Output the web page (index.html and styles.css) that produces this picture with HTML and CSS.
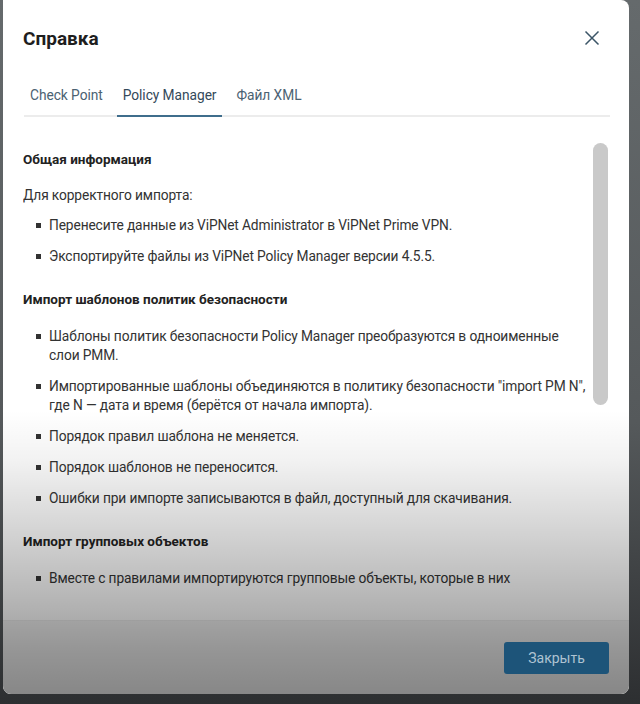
FILE: index.html
```html
<!DOCTYPE html>
<html lang="ru">
<head>
<meta charset="utf-8">
<title>Справка</title>
<link rel="stylesheet" href="styles.css">
</head>
<body>
<div class="dialog">
  <div class="header">
    <h1 class="title">Справка</h1>
    <button class="close" aria-label="Закрыть">
      <svg width="16" height="16" viewBox="0 0 16 16"><path d="M1.5 1.5 L14.5 14.5 M14.5 1.5 L1.5 14.5" stroke="#3b5567" stroke-width="1.5" fill="none"/></svg>
    </button>
  </div>
  <div class="tabs">
    <div class="tab">Check Point</div>
    <div class="tab active">Policy Manager</div>
    <div class="tab">Файл XML</div>
  </div>
  <div class="body">
    <div class="scroll">
      <h2 class="h">Общая информация</h2>
      <p class="p">Для корректного импорта:</p>
      <ul class="list">
        <li>Перенесите данные из ViPNet Administrator в ViPNet Prime VPN.</li>
        <li>Экспортируйте файлы из ViPNet Policy Manager версии 4.5.5.</li>
      </ul>
      <h2 class="h h2">Импорт шаблонов политик безопасности</h2>
      <ul class="list">
        <li>Шаблоны политик безопасности Policy Manager преобразуются в одноименные слои PMM.</li>
        <li>Импортированные шаблоны объединяются в политику безопасности "import PM N", где N — дата и время (берётся от начала импорта).</li>
        <li>Порядок правил шаблона не меняется.</li>
        <li>Порядок шаблонов не переносится.</li>
        <li>Ошибки при импорте записываются в файл, доступный для скачивания.</li>
      </ul>
      <h2 class="h h2">Импорт групповых объектов</h2>
      <ul class="list">
        <li>Вместе с правилами импортируются групповые объекты, которые в них используются.</li>
      </ul>
    </div>
    <div class="thumb"></div>
  </div>
  <div class="footer">
    <button class="btn">Закрыть</button>
  </div>
  <div class="shade"></div>
</div>
</body>
</html>
```
FILE: styles.css
```css
html, body {
  margin: 0;
  padding: 0;
}
body {
  width: 640px;
  height: 704px;
  overflow: hidden;
  background: linear-gradient(to bottom, #656a6c 0%, #55595b 60%, #2d2f31 100%);
  font-family: Roboto, "Noto Sans", sans-serif;
}
.dialog {
  position: relative;
  margin-left: 3px;
  width: 626px;
  height: 694px;
  background: #ffffff;
  border-radius: 0 8px 8px 8px;
  display: flex;
  flex-direction: column;
  overflow: hidden;
}
.header {
  height: 80px;
  display: flex;
  align-items: center;
  justify-content: space-between;
  padding: 0 29px 0 20px;
  flex: none;
}
.title {
  margin: 0;
  font-size: 19px;
  font-weight: 700;
  color: #1e1e1e;
  padding-bottom: 4px;
}
.close {
  border: 0;
  background: none;
  padding: 0;
  width: 16px;
  height: 16px;
  display: flex;
  margin-bottom: 5px;
}
.tabs {
  flex: none;
  display: flex;
  gap: 8px;
  margin: 0 19px 0 21px;
  height: 37px;
  border-bottom: 2px solid #ececec;
  box-sizing: border-box;
}
.tab {
  padding: 7px 6px 0;
  font-size: 13.75px;
  letter-spacing: -0.05px;
  color: #4b6272;
  margin-bottom: -2px;
  border-bottom: 2px solid transparent;
}
.tab.active {
  color: #34495a;
  border-bottom-color: #3f6d8c;
}
.body {
  position: relative;
  flex: none;
  height: 471px;
  padding: 0 19px 0 20px;
  margin-bottom: 32px;
}
.scroll {
  height: 100%;
  overflow: hidden;
  padding-top: 33px;
  box-sizing: border-box;
  color: #333333;
  font-size: 13.75px;
  letter-spacing: -0.12px;
}
.thumb {
  position: absolute;
  right: 21px;
  top: 26px;
  width: 15px;
  height: 262px;
  border-radius: 8px;
  background: #c9c9c9;
}
.h {
  margin: 0;
  font-size: 13.5px;
  font-weight: 700;
  letter-spacing: 0;
  color: #222222;
  line-height: 19px;
}
.h2 {
  margin-top: 24px;
}
.p {
  margin: 17px 0 0;
  line-height: 19px;
}
.list {
  list-style: none;
  margin: 0;
  padding: 0 22px 0 13px;
}
.list li {
  position: relative;
  padding-left: 13px;
  line-height: 19px;
  margin-top: 12px;
}
.p + .list li:first-child {
  margin-top: 11px;
}
.h + .list li:first-child {
  margin-top: 18px;
}
.list li::before {
  content: "";
  position: absolute;
  left: 0;
  top: 7px;
  width: 5px;
  height: 5px;
  background: #333333;
}
.footer {
  flex: 1;
  display: flex;
  justify-content: flex-end;
  align-items: flex-start;
  padding: 21px 20px 0;
  background: #f1f1f1;
  border-top: 1px solid #ebebeb;
}
.btn {
  position: relative;
  z-index: 2;
  width: 105px;
  height: 32px;
  border: 0;
  border-radius: 3px;
  background: #1d5479;
  color: #aec3d2;
  font-family: Roboto, "Noto Sans", sans-serif;
  font-size: 14px;
}
.shade {
  position: absolute;
  inset: 0;
  z-index: 1;
  pointer-events: none;
  background: linear-gradient(to bottom,
    rgba(0,0,0,0) 0px,
    rgba(0,0,0,0) 410px,
    rgba(0,0,0,0.05) 460px,
    rgba(0,0,0,0.17) 530px,
    rgba(0,0,0,0.29) 600px,
    rgba(0,0,0,0.38) 650px,
    rgba(0,0,0,0.44) 694px);
}
```
